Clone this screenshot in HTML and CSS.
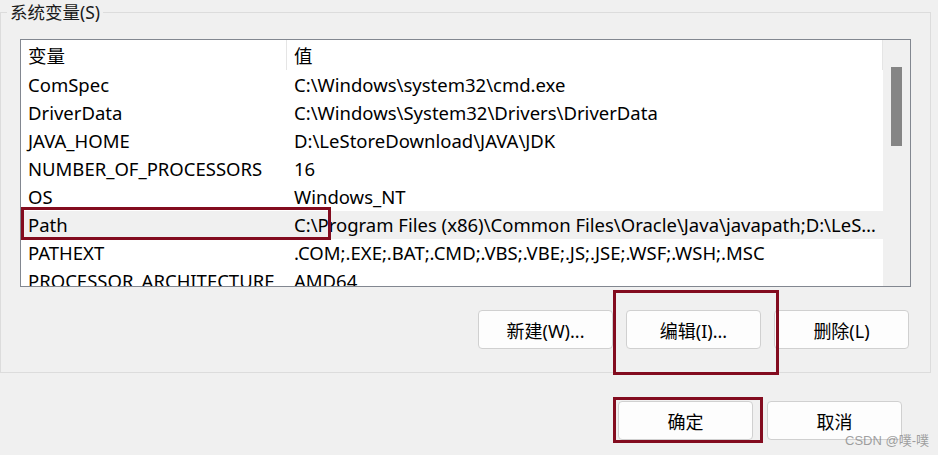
FILE: index.html
```html
<!DOCTYPE html>
<html lang="zh-CN">
<head>
<meta charset="utf-8">
<title>系统变量</title>
<link rel="stylesheet" href="styles.css">
</head>
<body>
<div class="page">
  <div class="group">
    <div class="group-title">系统变量(S)</div>
    <div class="list">
      <div class="list-body">
        <div class="row head">
          <div class="cell name">变量</div>
          <div class="cell value">值</div>
        </div>
        <div class="row"><div class="cell name">ComSpec</div><div class="cell value">C:\Windows\system32\cmd.exe</div></div>
        <div class="row"><div class="cell name">DriverData</div><div class="cell value">C:\Windows\System32\Drivers\DriverData</div></div>
        <div class="row"><div class="cell name">JAVA_HOME</div><div class="cell value">D:\LeStoreDownload\JAVA\JDK</div></div>
        <div class="row"><div class="cell name">NUMBER_OF_PROCESSORS</div><div class="cell value">16</div></div>
        <div class="row"><div class="cell name">OS</div><div class="cell value">Windows_NT</div></div>
        <div class="row selected"><div class="cell name">Path</div><div class="cell value">C:\Program Files (x86)\Common Files\Oracle\Java\javapath;D:\LeStoreDownload\JAVA\JDK\bin</div></div>
        <div class="row"><div class="cell name">PATHEXT</div><div class="cell value">.COM;.EXE;.BAT;.CMD;.VBS;.VBE;.JS;.JSE;.WSF;.WSH;.MSC</div></div>
        <div class="row"><div class="cell name">PROCESSOR_ARCHITECTURE</div><div class="cell value">AMD64</div></div>
      </div>
      <div class="scrollbar"><div class="thumb"></div></div>
      <div class="mark mark-path"></div>
    </div>
    <div class="btn-row">
      <button class="btn">新建(W)...</button>
      <button class="btn">编辑(I)...</button>
      <button class="btn">删除(L)</button>
    </div>
    <div class="mark mark-edit"></div>
  </div>
  <div class="ok-row">
    <button class="btn">确定</button>
    <button class="btn">取消</button>
    <div class="mark mark-ok"></div>
  </div>
  <div class="watermark">CSDN @噗-噗</div>
</div>
</body>
</html>
```

FILE: styles.css
```css
html, body {
  margin: 0;
  padding: 0;
  background: #f0f0f0;
}
body {
  font-family: "Noto Sans", "Noto Sans CJK SC", sans-serif;
  color: #000;
  width: 938px;
  height: 455px;
  overflow: hidden;
}
.page {
  position: relative;
  padding-top: 12px;
  height: 443px;
}
.group {
  position: relative;
  width: 929px;
  height: 359px;
  border: 1px solid #dcdcdc;
  padding: 0;
  box-sizing: content-box;
  display: flex;
  flex-direction: column;
}
.group-title {
  position: absolute;
  left: 6px;
  top: -13px;
  padding: 0 3px;
  background: #f0f0f0;
  font-size: 17.5px;
  line-height: 24px;
  color: #1a1a1a;
}
.list {
  position: relative;
  margin: 26px 0 0 19px;
  width: 889px;
  height: 246px;
  border: 1px solid #828790;
  background: #fff;
  display: flex;
  overflow: hidden;
}
.list-body {
  width: 862px;
  display: flex;
  flex-direction: column;
}
.row {
  display: grid;
  grid-template-columns: 266px 596px;
  height: 28px;
  flex: none;
  font-size: 18.5px;
  line-height: 28px;
}
.row.head {
  height: 31px;
  line-height: 31px;
}
.row.head .cell.name {
  border-right: 1px solid #e5e5e5;
}
.row.head .cell.value {
  border-right: 1px solid #e5e5e5;
}
.row.head .cell {
  height: 30px;
}
.cell {
  padding-left: 7px;
  white-space: nowrap;
  overflow: hidden;
  text-overflow: ellipsis;
  box-sizing: border-box;
}
.cell.value {
  padding-right: 4px;
}
.row.selected {
  background: #f0f0f0;
}
.scrollbar {
  width: 27px;
  background: #f0f0f0;
  position: relative;
  flex: none;
}
.thumb {
  margin: 27px 0 0 8px;
  width: 11px;
  height: 79px;
  background: #858585;
}
.btn-row {
  display: flex;
  justify-content: flex-end;
  gap: 13px;
  margin: 23px 21px 0 0;
}
.btn {
  width: 135px;
  height: 39px;
  background: #fdfdfd;
  border: 1px solid #d0d0d0;
  border-radius: 4px;
  font-family: "Noto Sans", "Noto Sans CJK SC", sans-serif;
  font-size: 18px;
  color: #000;
  padding: 0;
  box-sizing: border-box;
}
.ok-row {
  position: relative;
  display: flex;
  justify-content: flex-end;
  gap: 14px;
  margin: 28px 36px 0 0;
}
.mark {
  position: absolute;
  border: 3px solid #830c1f;
  box-sizing: border-box;
}
.mark-path {
  left: 0px;
  top: 167px;
  width: 310px;
  height: 33px;
}
.mark-edit {
  left: 612px;
  top: 277px;
  width: 166px;
  height: 85px;
}
.mark-ok {
  left: 613px;
  top: -4px;
  width: 150px;
  height: 46px;
}
.watermark {
  position: absolute;
  left: 845px;
  top: 430px;
  font-family: "Liberation Sans", "Noto Sans CJK SC", sans-serif;
  font-size: 13px;
  color: rgba(130, 130, 130, 0.75);
  white-space: nowrap;
}
```
